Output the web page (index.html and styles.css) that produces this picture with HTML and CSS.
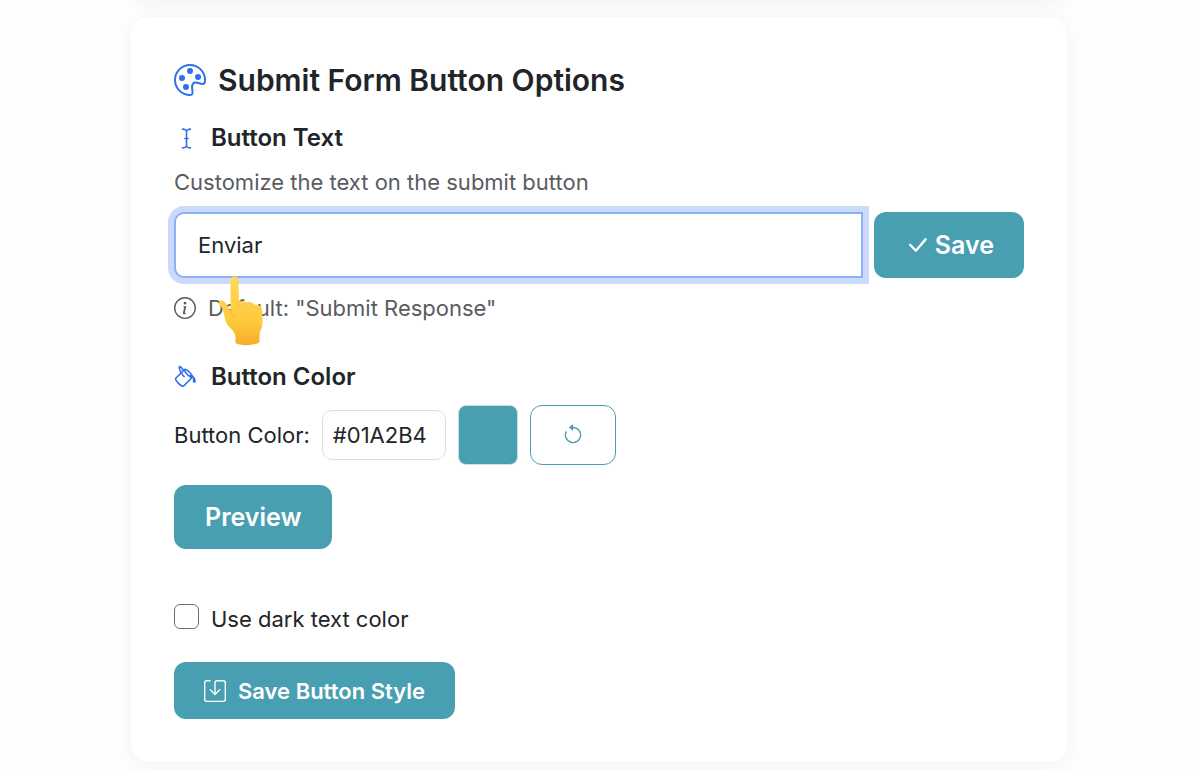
FILE: index.html
```html
<!DOCTYPE html>
<html lang="en">
<head>
<meta charset="utf-8">
<meta name="viewport" content="width=device-width, initial-scale=1">
<title>Submit Form Button Options</title>
<link rel="stylesheet" href="styles.css">
</head>
<body>
<main class="page">
  <div class="card card-previous"></div>
  <section class="card options">
    <h2 class="title">
      <svg class="icon icon-title" viewBox="0 0 16 16" aria-hidden="true"><path d="M8 5a1.5 1.5 0 1 0 0-3 1.5 1.5 0 0 0 0 3m4 3a1.5 1.5 0 1 0 0-3 1.5 1.5 0 0 0 0 3M5.5 7a1.5 1.5 0 1 1-3 0 1.5 1.5 0 0 1 3 0m.5 6a1.5 1.5 0 1 0 0-3 1.5 1.5 0 0 0 0 3"/><path d="M16 8c0 3.15-1.866 2.585-3.567 2.07C11.42 9.763 10.465 9.473 10 10c-.603.683-.475 1.819-.351 2.92C9.826 14.495 9.996 16 8 16a8 8 0 1 1 8-8m-8 7c.611 0 .654-.171.655-.176.078-.146.124-.464.07-1.119-.014-.168-.037-.37-.061-.591-.052-.464-.112-1.005-.118-1.462-.01-.707.083-1.61.704-2.314.369-.417.845-.578 1.272-.618.404-.038.812.026 1.16.104.343.077.702.186 1.025.284l.028.008c.346.105.658.199.953.266.653.148.904.083.991.024C14.717 9.38 15 9.161 15 8a7 7 0 1 0-7 7"/></svg>
      Submit Form Button Options
    </h2>

    <h3 class="subtitle">
      <svg class="icon" viewBox="0 0 16 16" aria-hidden="true"><path d="M5 2a.5.5 0 0 1 .5-.5c.862 0 1.573.287 2.06.566.174.099.321.198.44.286.119-.088.266-.187.44-.286A4.17 4.17 0 0 1 10.5 1.5a.5.5 0 0 1 0 1c-.638 0-1.177.213-1.564.434a3.5 3.5 0 0 0-.436.294V7.5H9a.5.5 0 0 1 0 1h-.5v4.272c.1.08.248.187.436.294.387.221.926.434 1.564.434a.5.5 0 0 1 0 1 4.17 4.17 0 0 1-2.06-.566A5 5 0 0 1 8 13.65a5 5 0 0 1-.44.285 4.17 4.17 0 0 1-2.06.566.5.5 0 0 1 0-1c.638 0 1.177-.213 1.564-.434.188-.107.335-.214.436-.294V8.5H7a.5.5 0 0 1 0-1h.5V3.228a3.5 3.5 0 0 0-.436-.294A3.17 3.17 0 0 0 5.5 2.5.5.5 0 0 1 5 2"/></svg>
      Button Text
    </h3>
    <label class="muted" for="button-text">Customize the text on the submit button</label>
    <div class="input-group">
      <input class="text-input" id="button-text" type="text" value="Enviar">
      <button class="btn btn-large" type="button">
        <svg class="icon icon-check" viewBox="0 0 16 16" aria-hidden="true"><path d="M12.736 3.97a.733.733 0 0 1 1.047 0c.286.289.29.756.01 1.05L7.88 12.01a.733.733 0 0 1-1.065.02L3.217 8.384a.757.757 0 0 1 0-1.06.733.733 0 0 1 1.047 0l3.052 3.093 5.4-6.425z"/></svg>
        Save
      </button>
      <svg class="pointer" viewBox="0 0 46 70" aria-hidden="true">
        <defs><linearGradient id="skin" x1="0" y1="0" x2="0" y2="1"><stop offset="0" stop-color="#ffd95a"/><stop offset=".65" stop-color="#ffca3c"/><stop offset="1" stop-color="#f4ad27"/></linearGradient></defs>
        <path fill="url(#skin)" d="M12.500 5C12.500 2 14 .5 16.500 .5S20.500 2 20.500 5L21 26C23 24.500 26 24.500 28 26.500C31 25 34 26 36 28.500C41 28 44.500 31 44.500 36V46C44.500 52 42 54 41.500 59V66C37 70 22 70 17.500 67V61C17 54 10 52 7.500 45L5 34C3.500 31 0 28 1 26C2.500 23 7 25 9 29L12.500 35Z"/>
        <path fill="none" stroke="#f3b530" stroke-linecap="round" d="M20.500 27V30M28 27V29M12.500 35Q14 40 17 41M18 61Q29 65 41 60"/>
      </svg>
    </div>
    <p class="muted hint">
      <svg class="icon" viewBox="0 0 16 16" aria-hidden="true"><path d="M8 15A7 7 0 1 1 8 1a7 7 0 0 1 0 14m0 1A8 8 0 1 0 8 0a8 8 0 0 0 0 16"/><path d="m8.930 6.588-2.290.287-.082.380.450.083c.294.070.352.176.288.469l-.738 3.468c-.194.897.105 1.319.808 1.319.545 0 1.178-.252 1.465-.598l.088-.416c-.200.176-.492.246-.686.246-.275 0-.375-.193-.304-.533zM9 4.500a1 1 0 1 1-2 0 1 1 0 0 1 2 0"/></svg>
      Default: "Submit Response"
    </p>

    <h3 class="subtitle subtitle-color">
      <svg class="icon" viewBox="0 0 16 16" aria-hidden="true"><path d="M6.192 2.78c-.458-.677-.927-1.248-1.35-1.643a3 3 0 0 0-.71-.515c-.217-.104-.56-.205-.882-.02-.367.213-.427.63-.43.896-.003.304.064.664.173 1.044.196.687.556 1.528 1.035 2.402L.752 8.22c-.277.277-.269.656-.218.918.055.283.187.593.36.903.348.627.92 1.361 1.626 2.068.707.707 1.441 1.278 2.068 1.626.31.173.62.305.903.36.262.05.64.059.918-.218l5.615-5.615c.118.257.092.512.05.939-.03.292-.068.665-.073 1.176v.123h.003a1 1 0 0 0 1.993 0H14v-.057a1 1 0 0 0-.004-.117c-.055-1.25-.7-2.738-1.86-3.494a4 4 0 0 0-.211-.434c-.349-.626-.92-1.36-1.627-2.067S8.857 3.052 8.23 2.704c-.31-.172-.62-.304-.903-.36-.262-.05-.64-.058-.918.219zM4.16 1.867c.381.356.844.922 1.311 1.632l-.704.705c-.382-.727-.66-1.402-.813-1.938a3.3 3.3 0 0 1-.131-.673q.137.09.337.274m.394 3.965c.54.852 1.107 1.567 1.607 2.033a.5.5 0 1 0 .682-.732c-.453-.422-1.017-1.136-1.564-2.027l1.088-1.088q.081.181.183.365c.349.627.92 1.361 1.627 2.068.706.707 1.44 1.278 2.068 1.626q.183.103.365.183l-4.861 4.862-.068-.01c-.137-.027-.342-.104-.608-.252-.524-.292-1.186-.8-1.846-1.46s-1.168-1.32-1.46-1.846c-.147-.265-.225-.47-.251-.607l-.01-.068zm2.87-1.935a2.4 2.4 0 0 1-.241-.561c.135.033.324.11.562.241.524.292 1.186.8 1.846 1.46.45.45.83.901 1.118 1.31a3.5 3.5 0 0 0-1.066.091 11 11 0 0 1-.76-.694c-.66-.66-1.167-1.322-1.458-1.847z"/></svg>
      Button Color
    </h3>
    <div class="color-row">
      <label for="button-color">Button Color:</label>
      <input class="hex-input" id="button-color" type="text" value="#01A2B4">
      <button class="swatch" type="button" aria-label="Pick a color"></button>
      <button class="btn-reset" type="button" aria-label="Reset color">
        <svg class="icon" viewBox="0 0 16 16" aria-hidden="true"><path d="M8 3a5 5 0 1 1-4.546 2.914.5.5 0 0 0-.908-.417A6 6 0 1 0 8 2z"/><path d="M8 4.466V.534a.25.25 0 0 0-.41-.192L5.230 2.308a.25.25 0 0 0 0 .384l2.360 1.966A.25.25 0 0 0 8 4.466"/></svg>
      </button>
    </div>
    <button class="btn btn-large btn-preview" type="button">Preview</button>

    <div class="check-row">
      <input class="checkbox" id="dark-text" type="checkbox">
      <label for="dark-text">Use dark text color</label>
    </div>
    <button class="btn btn-style" type="button">
      <svg class="icon" viewBox="0 0 16 16" aria-hidden="true"><path d="M2 1a1 1 0 0 0-1 1v12a1 1 0 0 0 1 1h12a1 1 0 0 0 1-1V2a1 1 0 0 0-1-1H9.500a1 1 0 0 0-1 1v7.293l2.646-2.647a.5.5 0 0 1 .708.708l-3.500 3.500a.5.5 0 0 1-.708 0l-3.500-3.500a.5.5 0 1 1 .708-.708L7.500 9.293V2a2 2 0 0 1 2-2H14a2 2 0 0 1 2 2v12a2 2 0 0 1-2 2H2a2 2 0 0 1-2-2V2a2 2 0 0 1 2-2h2.500a.5.5 0 0 1 0 1z"/></svg>
      Save Button Style
    </button>
  </section>
</main>
</body>
</html>
```
FILE: styles.css
```css
* {
  box-sizing: border-box;
}

body {
  display: flow-root;
  min-height: 100vh;
  margin: 0;
  padding-right: 2px;
  background: #fefefe;
  color: #212529;
  font-family: Inter, "Liberation Sans", sans-serif;
  font-size: 22px;
  line-height: 32px;
}

.page {
  max-width: 936px;
  margin: 0 auto;
}

.card {
  border-radius: 18px;
  background: #fff;
  box-shadow: 0 4px 22px rgba(0, 0, 0, 0.05);
}

.card-previous {
  height: 40px;
  margin-top: -40px;
}

.options {
  display: flex;
  flex-direction: column;
  align-items: flex-start;
  margin-top: 17px;
  padding: 43px;
}

h2,
h3,
p {
  margin: 0;
}

button,
input {
  font-family: inherit;
  color: inherit;
}

.icon {
  flex: none;
  width: 22px;
  height: 22px;
  fill: currentColor;
}

.title .icon,
.subtitle .icon {
  color: #2f6fed;
}

.title {
  display: flex;
  align-items: center;
  gap: 12px;
  font-size: 30px;
  font-weight: 600;
  line-height: 40px;
}

.title .icon-title {
  width: 32px;
  height: 32px;
}

.subtitle {
  display: flex;
  align-items: center;
  gap: 12px;
  margin-top: 22px;
  font-size: 24px;
  font-weight: 600;
}

.subtitle .icon {
  width: 25px;
  height: 25px;
}

.subtitle-color {
  margin-top: 37px;
}

.muted {
  margin-top: 12px;
  color: #5a5c5f;
}

.input-group {
  position: relative;
  display: flex;
  gap: 11px;
  align-self: stretch;
  margin-top: 14px;
}

.text-input {
  flex: 1;
  min-width: 0;
  height: 66px;
  padding: 0 22px;
  border: 2px solid #8ab1f5;
  border-radius: 10px 0 0 10px;
  outline: none;
  background: #fff;
  box-shadow: 0 0 0 6px #cbdafb;
  font-size: 22px;
}

.pointer {
  position: absolute;
  top: 64px;
  left: 44px;
  width: 46px;
  height: 70px;
}

.btn {
  display: flex;
  align-items: center;
  justify-content: center;
  gap: 12px;
  padding: 0 30px;
  border: 0;
  border-radius: 12px;
  background: #489fb2;
  color: #fff;
  font-size: 22px;
  font-weight: 600;
}

.btn-large {
  min-height: 66px;
  gap: 5px;
  font-size: 25px;
}

.icon-check {
  width: 26px;
  height: 26px;
}

.hint {
  display: flex;
  align-items: center;
  gap: 12px;
  margin-top: 14px;
}

.color-row {
  display: flex;
  align-items: center;
  gap: 12px;
  margin-top: 12px;
}

.hex-input {
  width: 124px;
  height: 50px;
  padding: 0 10px;
  border: 1px solid #dcdee1;
  border-radius: 10px;
  background: #fff;
  font-size: 22px;
}

.swatch {
  width: 60px;
  height: 60px;
  padding: 0;
  border: 1px solid #cfdde6;
  border-radius: 8px;
  background: #489fb2;
}

.btn-reset {
  display: flex;
  align-items: center;
  justify-content: center;
  width: 86px;
  height: 60px;
  padding: 0;
  border: 1px solid #489fb2;
  border-radius: 12px;
  background: #fff;
  color: #489fb2;
}

.btn-preview {
  min-height: 64px;
  margin-top: 20px;
  padding: 0 31px;
}

.check-row {
  display: flex;
  align-items: flex-start;
  gap: 12px;
  margin-top: 54px;
}

.checkbox {
  appearance: none;
  width: 25px;
  height: 25px;
  margin: 1px 0 0;
  border: 1px solid #6c7075;
  border-radius: 6px;
  background: #fff;
}

.btn-style {
  min-height: 57px;
  margin-top: 27px;
}
```
